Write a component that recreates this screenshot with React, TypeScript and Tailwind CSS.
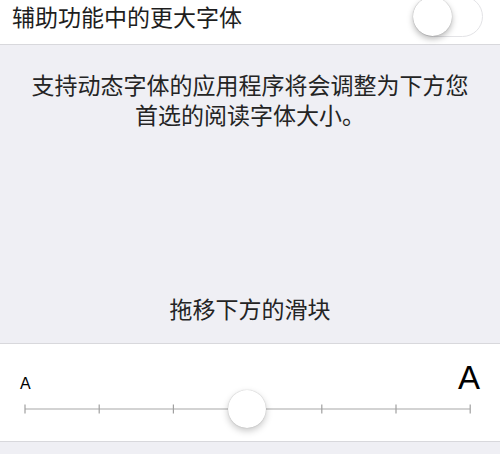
import React from "react";

const cjk = { fontFamily: '"Noto Sans CJK SC", "Noto Sans", sans-serif' };

export default function App() {
  const ticks = [0, 1, 2, 4, 5, 6];
  return (
    <div className="w-[500px] h-[454px] overflow-hidden bg-[#efeff4]" style={cjk}>
      {/* Top row */}
      <div className="h-[45px] bg-white border-b border-[#d8d8dc] flex items-center justify-between pl-[12px] pr-[17px] pb-[12px]">
        <span className="text-[23px] leading-[30px] text-[#1e1e1e]">辅助功能中的更大字体</span>
        <div className="relative w-[70px] h-[41px] rounded-full border-[1.5px] border-[#e3e3e6] bg-white shrink-0">
          <div className="absolute left-[-1px] top-[0px] w-[39px] h-[39px] rounded-full bg-white shadow-[0_3px_6px_rgba(0,0,0,0.28),0_0_1px_rgba(0,0,0,0.35)]" />
        </div>
      </div>

      {/* Gray info section */}
      <div className="h-[298px] flex flex-col items-center justify-between pt-[24px] pb-[20px]">
        <p className="text-[23px] leading-[30px] text-[#242424] text-center px-[10px]">
          支持动态字体的应用程序将会调整为下方您
          <br />
          首选的阅读字体大小。
        </p>
        <p className="text-[23px] leading-[30px] text-[#242424] text-center">拖移下方的滑块</p>
      </div>

      {/* Slider section */}
      <div className="bg-white border-y border-[#d8d8dc] pt-[17px] pb-[17px]">
        <div className="flex items-baseline justify-between pl-[20px] pr-[20px]" style={{ fontFamily: '"Liberation Sans", Arial, sans-serif' }}>
          <span className="text-[16px] leading-none text-black">A</span>
          <span className="text-[33px] leading-none text-black">A</span>
        </div>
        <div className="relative h-[30px]">
          <svg width="500" height="30" className="block">
            <line x1="25" y1="15" x2="470" y2="15" stroke="#a8a8a8" strokeWidth="1.2" />
            {ticks.map((i) => (
              <line key={i} x1={25 + i * 74.2} y1="10.5" x2={25 + i * 74.2} y2="19.5" stroke="#a0a0a0" strokeWidth="1.2" />
            ))}
          </svg>
          <div className="absolute left-[228px] top-[-4px] w-[38px] h-[38px] rounded-full bg-white shadow-[0_3px_7px_rgba(0,0,0,0.22),0_0_1px_rgba(0,0,0,0.3)]" />
        </div>
      </div>
    </div>
  );
}
